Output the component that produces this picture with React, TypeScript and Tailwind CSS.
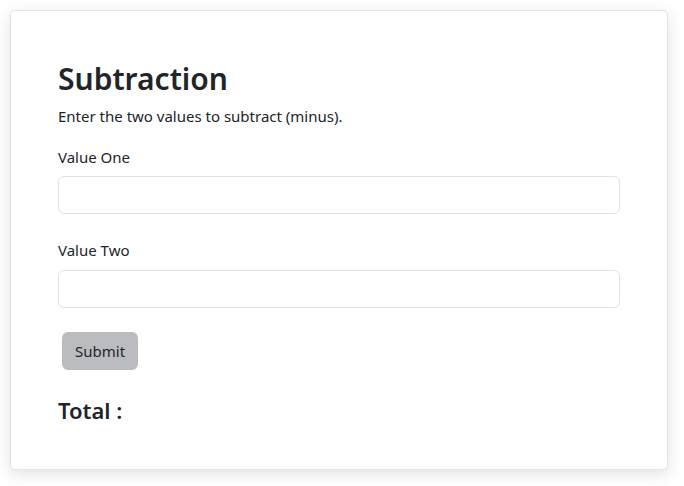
export default function App() {
  return (
    <div className="min-h-[486px] bg-white p-[10px]" style={{ fontFamily: '"Noto Sans", "Open Sans", sans-serif' }}>
      <div className="h-[460px] w-[658px] rounded-[5px] border border-[#e3e3e3] bg-white px-[47px] pt-[49px] text-[#212529] shadow-[0_4px_16px_rgba(0,0,0,0.12)]">
        <h1 className="text-[30px] font-semibold leading-[38px]">Subtraction</h1>
        <p className="mt-[7px] text-[15px] leading-[22px]">Enter the two values to subtract (minus).</p>
        <label className="mt-[19px] block text-[15px] leading-[22px]">Value One</label>
        <input className="mt-[8px] block h-[38px] w-full rounded-[6px] border border-[#dee2e6] bg-white px-3" />
        <label className="mt-[25px] block text-[15px] leading-[22px]">Value Two</label>
        <input className="mt-[9px] block h-[38px] w-full rounded-[6px] border border-[#dee2e6] bg-white px-3" />
        <button className="ml-[4px] mt-[24px] block h-[38px] rounded-[6px] bg-[#bbbcc0] px-[13px] text-[15px] text-[#212529]">Submit</button>
        <h3 className="mt-[26px] text-[22px] font-semibold leading-[28px]">Total :</h3>
      </div>
    </div>
  );
}
